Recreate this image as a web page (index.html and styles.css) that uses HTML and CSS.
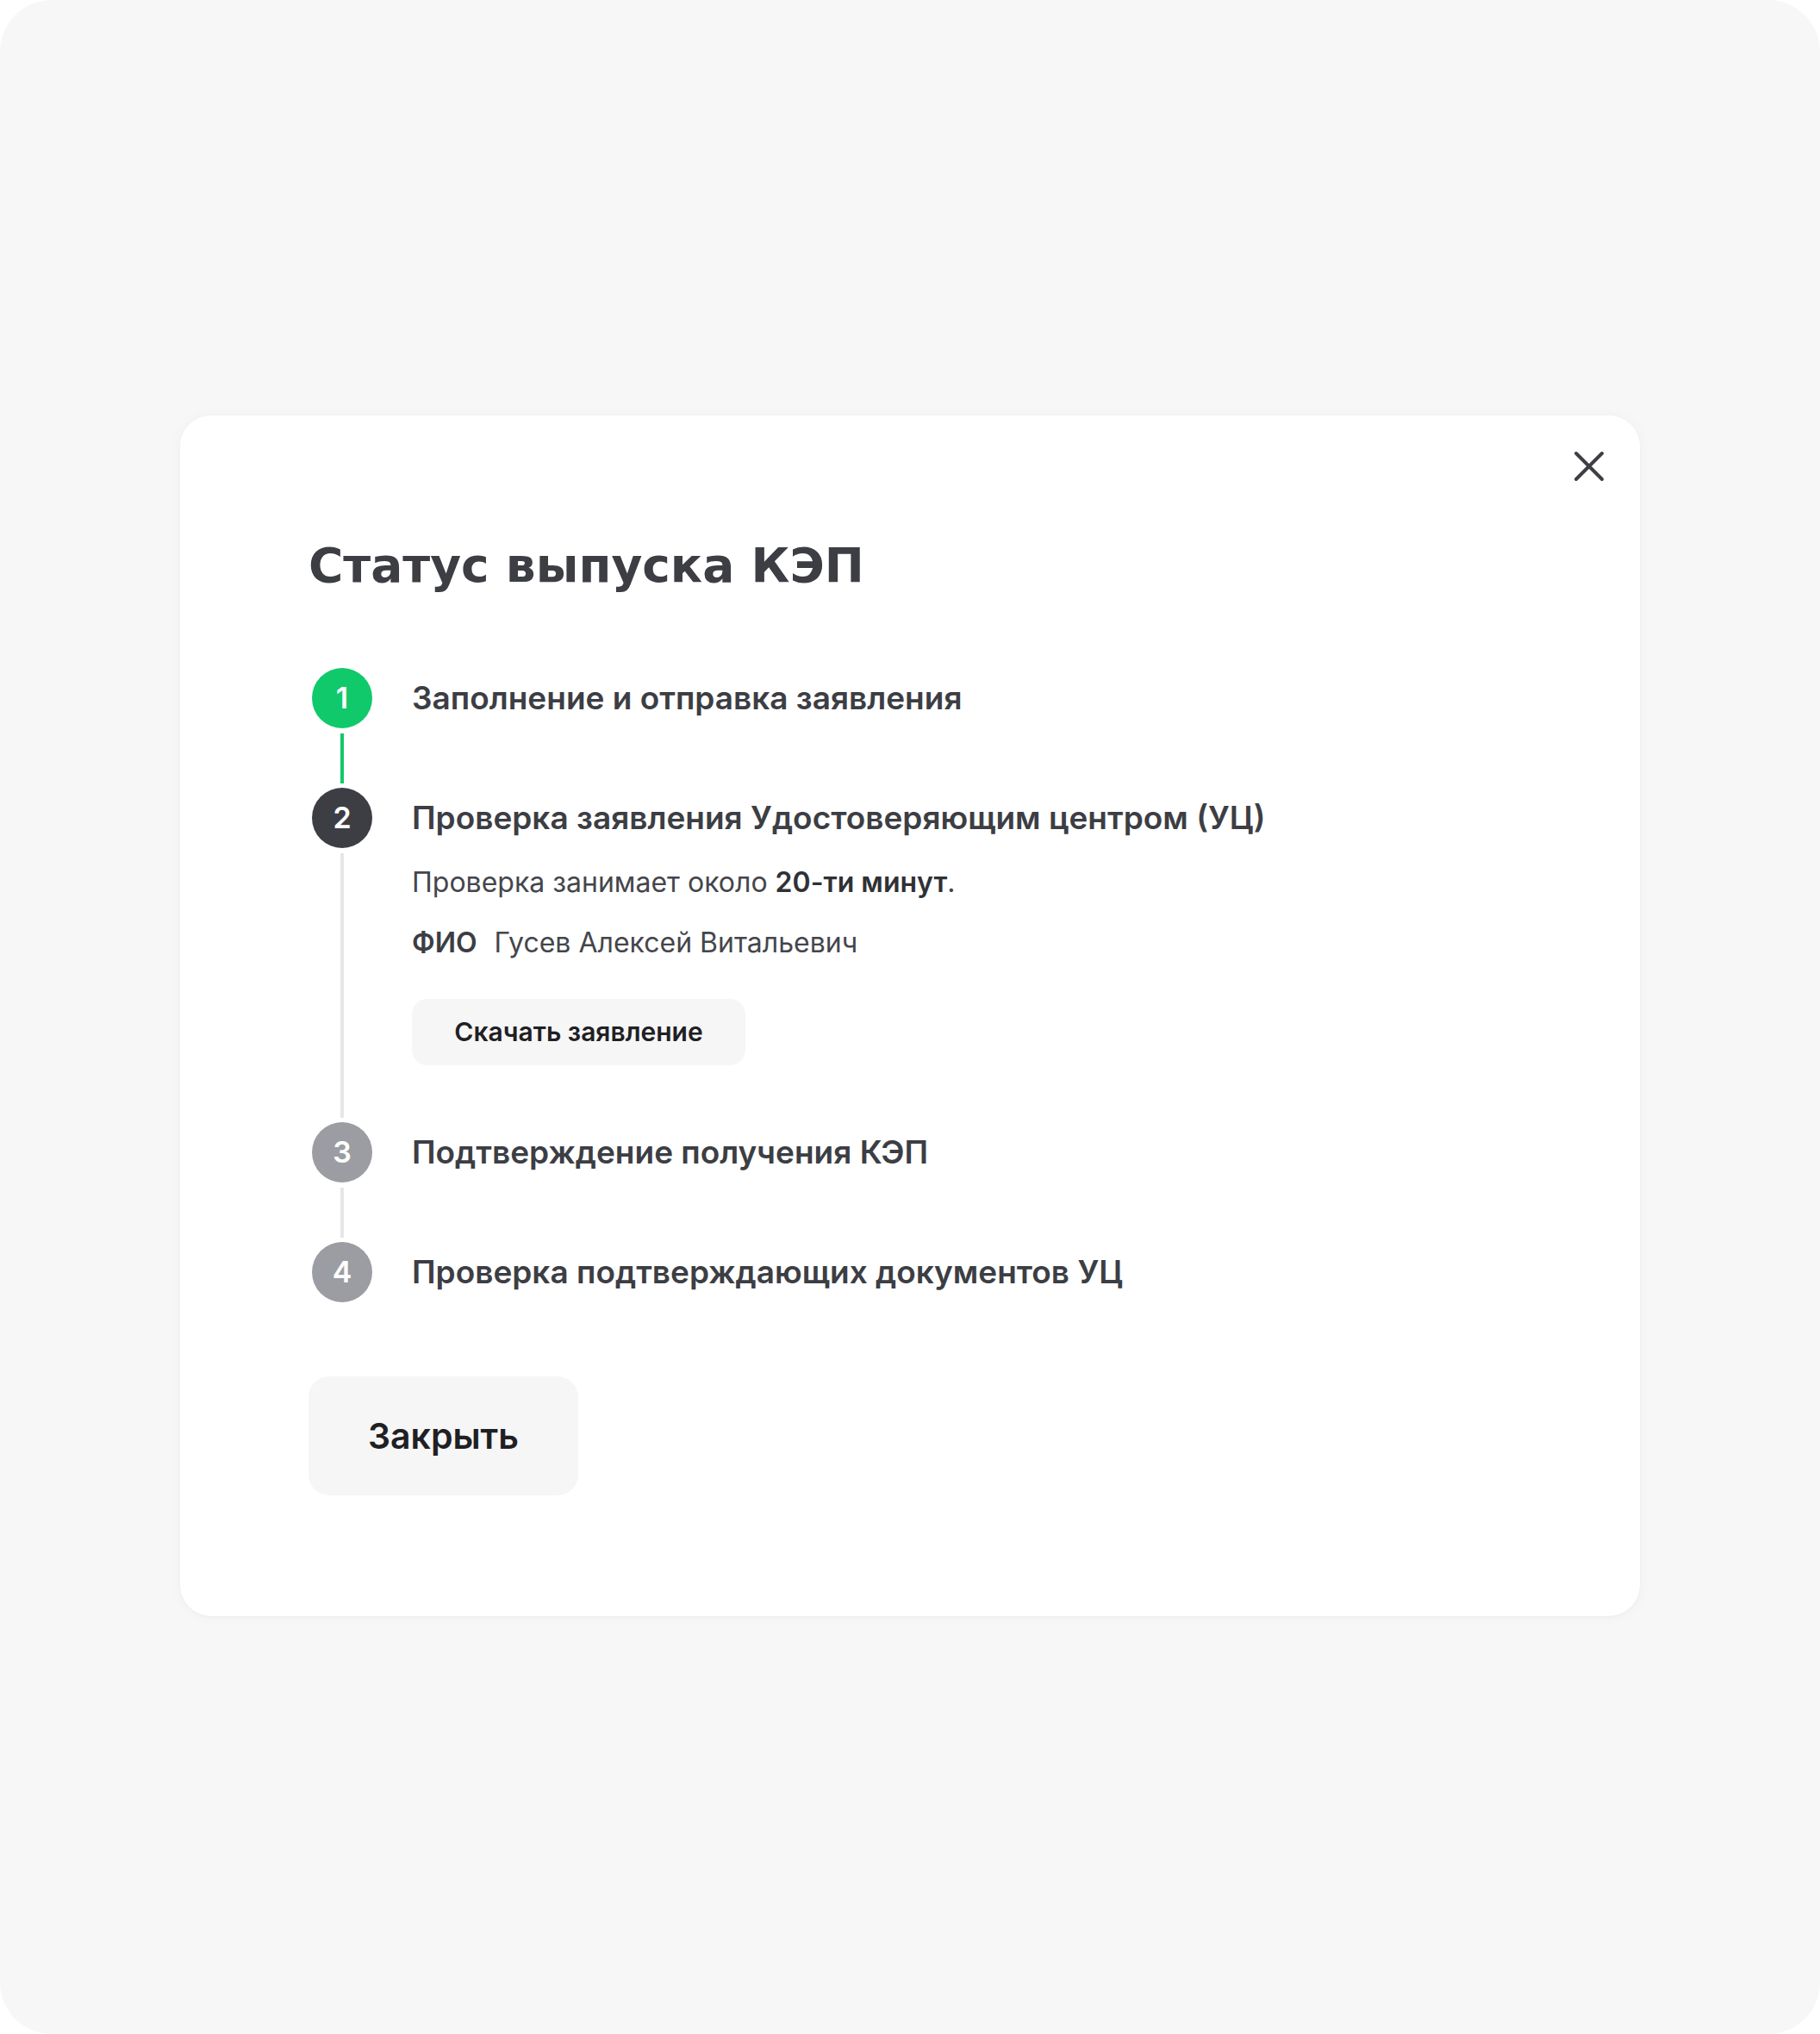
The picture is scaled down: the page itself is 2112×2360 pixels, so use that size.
FILE: index.html
```html
<!DOCTYPE html>
<html lang="ru">
<head>
<meta charset="utf-8">
<title>Статус выпуска КЭП</title>
<link rel="stylesheet" href="styles.css">
</head>
<body>
<div class="screen">
  <div class="modal">
    <button class="close" aria-label="Закрыть">
      <svg width="48" height="48" viewBox="0 0 48 48"><path d="M9 9 L39 39 M39 9 L9 39" stroke="#3d3f45" stroke-width="4" stroke-linecap="round" fill="none"/></svg>
    </button>
    <h1 class="title">Статус выпуска КЭП</h1>
    <ol class="steps">
      <li class="step step-done">
        <div class="rail"><span class="num num-done">1</span><span class="line line-done"></span></div>
        <div class="body"><div class="step-title">Заполнение и отправка заявления</div></div>
      </li>
      <li class="step step-current">
        <div class="rail"><span class="num num-current">2</span><span class="line"></span></div>
        <div class="body">
          <div class="step-title">Проверка заявления Удостоверяющим центром (УЦ)</div>
          <p class="desc">Проверка занимает около <b>20-ти минут</b>.</p>
          <p class="fio"><b>ФИО</b><span class="fio-name">Гусев Алексей Витальевич</span></p>
          <button class="btn-download">Скачать заявление</button>
        </div>
      </li>
      <li class="step">
        <div class="rail"><span class="num">3</span><span class="line"></span></div>
        <div class="body"><div class="step-title">Подтверждение получения КЭП</div></div>
      </li>
      <li class="step step-last">
        <div class="rail"><span class="num">4</span></div>
        <div class="body"><div class="step-title">Проверка подтверждающих документов УЦ</div></div>
      </li>
    </ol>
    <button class="btn-close">Закрыть</button>
  </div>
</div>
</body>
</html>
```
FILE: styles.css
```css
* { box-sizing: border-box; }
html, body { margin: 0; padding: 0; background: #ffffff; }
body { font-family: Inter, "Noto Sans", sans-serif; color: #3c3e44; }

.screen {
  width: 2112px;
  height: 2360px;
  background: #f7f7f7;
  border-radius: 60px;
  display: flex;
  align-items: center;
  justify-content: center;
}

.modal {
  position: relative;
  width: 1694px;
  background: #ffffff;
  border-radius: 36px;
  box-shadow: 0 0 16px rgba(0, 0, 0, 0.035), 0 2px 4px rgba(0, 0, 0, 0.02);
  padding: 140px 149px 140px;
  margin-top: -4px;
}

.close {
  position: absolute;
  top: 35px;
  right: 35px;
  width: 48px;
  height: 48px;
  padding: 0;
  border: 0;
  background: none;
  display: block;
}
.close svg { display: block; }

.title {
  margin: 0;
  font-family: "DejaVu Sans", sans-serif;
  font-weight: 700;
  font-size: 55px;
  line-height: 68px;
  color: #3c3e44;
  letter-spacing: 0;
}

.steps {
  list-style: none;
  margin: 85px 0 0;
  padding: 0;
}

.step {
  display: grid;
  grid-template-columns: 78px 1fr;
  column-gap: 42px;
  padding-bottom: 69px;
}
.step-current { padding-bottom: 66px; }
.step-last { padding-bottom: 0; }

.rail {
  display: flex;
  flex-direction: column;
  align-items: center;
  margin-bottom: -69px;
}
.step-current .rail { margin-bottom: -66px; }
.step-last .rail { margin-bottom: 0; }

.num {
  flex: none;
  width: 70px;
  height: 70px;
  border-radius: 50%;
  background: #9c9da2;
  color: #ffffff;
  font-size: 34px;
  font-weight: 600;
  display: flex;
  align-items: center;
  justify-content: center;
}
.num-done { background: #10c96b; }
.num-current { background: #3c3e44; }

.line {
  flex: 1;
  width: 4px;
  background: #e6e6e8;
  margin: 6px 0 5px;
}
.line-done { background: #10c96b; }

.step-title {
  font-size: 37px;
  font-weight: 600;
  line-height: 70px;
  color: #3c3e44;
}

.desc, .fio {
  margin: 0;
  font-size: 32px;
  line-height: 44px;
  color: #44464c;
}
.desc { margin-top: 18px; }
.desc b { font-weight: 600; color: #2f3136; }
.fio { margin-top: 26px; }
.fio b { font-weight: 600; color: #3c3e44; }
.fio-name { margin-left: 20px; }

.btn-download {
  display: block;
  margin-top: 43px;
  width: 387px;
  height: 77px;
  border: 0;
  border-radius: 18px;
  background: #f6f6f6;
  font-family: Inter, "Noto Sans", sans-serif;
  font-size: 30px;
  font-weight: 600;
  color: #1f2024;
}

.btn-close {
  display: block;
  margin-top: 86px;
  width: 313px;
  height: 138px;
  border: 0;
  border-radius: 24px;
  background: #f6f6f6;
  font-family: Inter, "Noto Sans", sans-serif;
  font-size: 41px;
  font-weight: 600;
  color: #1f2024;
}
```
